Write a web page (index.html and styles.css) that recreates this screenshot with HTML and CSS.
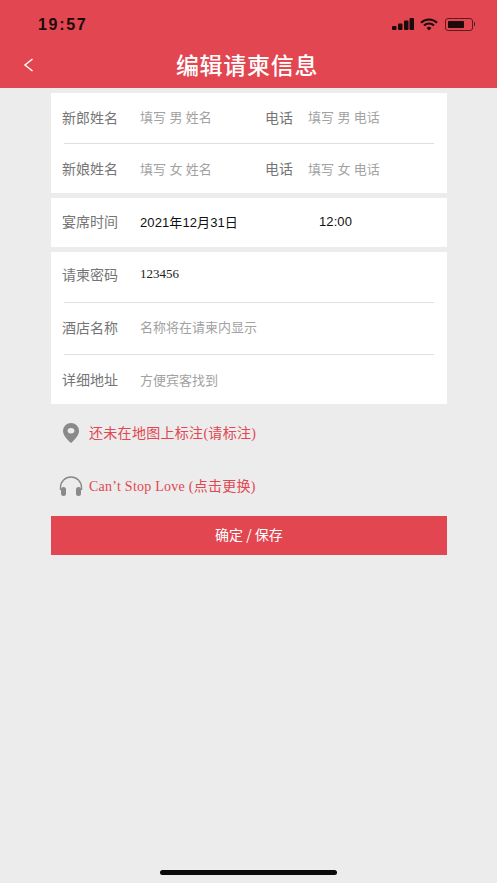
FILE: index.html
```html
<!DOCTYPE html>
<html lang="zh-CN">
<head>
    <meta charset="UTF-8">
    <meta name="viewport" content="width=device-width, initial-scale=1.0">
    <title>编辑请柬信息</title>
    <link rel="stylesheet" href="styles.css">
</head>
<body>
    <header class="header">
        <div class="status-bar">
            <span class="status-time">19:57</span>
            <div class="status-icons">
                <svg class="icon-signal" width="22" height="12" viewBox="0 0 22 12">
                    <rect x="0" y="8" width="4.500" height="4" rx="1"/>
                    <rect x="6" y="5.500" width="4.500" height="6.500" rx="1"/>
                    <rect x="12" y="2.500" width="4.500" height="9.500" rx="1"/>
                    <rect x="17.500" y="0" width="4.500" height="12" rx="1"/>
                </svg>
                <svg class="icon-wifi" width="18" height="13" viewBox="0 0 19 13">
                    <path d="M1 4.600a12.200 12.200 0 0 1 17 0" fill="none" stroke="#1d0a0c" stroke-width="2.200"/>
                    <path d="M4.200 7.600a7.600 7.600 0 0 1 10.600 0" fill="none" stroke="#1d0a0c" stroke-width="2.200"/>
                    <path d="M7 10.200a3.600 3.600 0 0 1 5 0l-2.500 2.600z" fill="#1d0a0c"/>
                </svg>
                <div class="battery">
                    <div class="battery-level"></div>
                </div>
                <div class="battery-cap"></div>
            </div>
        </div>
        <div class="title-bar">
            <svg class="back" width="11" height="14" viewBox="0 0 11 14">
                <path d="M9.500 1 2 7l7.500 6" fill="none" stroke="#fff" stroke-width="1.500"/>
            </svg>
            <h1 class="title">编辑请柬信息</h1>
        </div>
    </header>

    <main class="main">
        <section class="card">
            <div class="row">
                <span class="label">新郎姓名</span>
                <span class="hint name-hint">填写 男 姓名</span>
                <span class="label phone-label">电话</span>
                <span class="hint">填写 男 电话</span>
            </div>
            <div class="row">
                <span class="label">新娘姓名</span>
                <span class="hint name-hint">填写 女 姓名</span>
                <span class="label phone-label">电话</span>
                <span class="hint">填写 女 电话</span>
            </div>
        </section>

        <section class="card">
            <div class="row row-time">
                <span class="label">宴席时间</span>
                <span class="value date-value">2021年12月31日</span>
                <span class="value">12:00</span>
            </div>
        </section>

        <section class="card">
            <div class="row row-password">
                <span class="label">请柬密码</span>
                <span class="password">123456</span>
            </div>
            <div class="row row-hotel">
                <span class="label">酒店名称</span>
                <span class="hint">名称将在请柬内显示</span>
            </div>
            <div class="row">
                <span class="label">详细地址</span>
                <span class="hint">方便宾客找到</span>
            </div>
        </section>

        <div class="link-row link-map">
            <svg class="icon-pin" width="16" height="20" viewBox="0 0 16 20">
                <path fill-rule="evenodd" fill="#8a8a8a" d="M8 0a8 8 0 0 1 8 8c0 4-4 8.500-8 12C4 16.500 0 12 0 8a8 8 0 0 1 8-8zm0 5a3.400 2.700 0 1 0 0 5.400 3.400 2.700 0 0 0 0-5.400z"/>
            </svg>
            <span class="link-text map-text">还未在地图上标注(请标注)</span>
        </div>

        <div class="link-row link-music">
            <svg class="icon-headphones" width="24" height="20" viewBox="0 0 24 20">
                <path d="M1.500 14V11.500a10.500 10.500 0 0 1 21 0V14" fill="none" stroke="#8a8a8a" stroke-width="1.400"/>
                <rect x="2" y="11" width="5" height="9" rx="2.500" fill="#8a8a8a"/>
                <rect x="17" y="11" width="5" height="9" rx="2.500" fill="#8a8a8a"/>
            </svg>
            <span class="link-text music-text">Can’t Stop Love (点击更换)</span>
        </div>

        <div class="save-button">确定 / 保存</div>
    </main>

    <div class="home-indicator"></div>
</body>
</html>
```

FILE: styles.css
```css
body {
    margin: 0;
    height: 883px;
    overflow: hidden;
    position: relative;
    background-color: #ececec;
    font-family: "Liberation Serif", "Noto Sans CJK SC", serif;
}

.header {
    height: 88px;
    background-color: #e24651;
}

.status-bar {
    height: 46px;
    padding: 2px 22px 0 38px;
    display: flex;
    justify-content: space-between;
    align-items: center;
    box-sizing: border-box;
}

.status-time {
    margin-top: 2px;
    font-family: "Liberation Sans", sans-serif;
    font-size: 16px;
    font-weight: bold;
    letter-spacing: 1.700px;
    color: #1d0a0c;
}

.status-icons {
    display: flex;
    align-items: center;
}

.icon-signal {
    fill: #1d0a0c;
    margin-right: 6px;
}

.icon-wifi {
    margin-right: 7px;
}

.battery {
    width: 28px;
    height: 13px;
    padding: 2px;
    box-sizing: border-box;
    border: 1px solid #5c1c22;
    border-radius: 3px;
}

.battery-level {
    width: 16px;
    height: 100%;
    background-color: #1d0a0c;
    border-radius: 1px;
}

.battery-cap {
    width: 1px;
    height: 4px;
    margin-left: 1px;
    background-color: #5c1c22;
}

.title-bar {
    height: 42px;
    padding: 0 3px 6px 0;
    box-sizing: border-box;
    position: relative;
    display: flex;
    justify-content: center;
    align-items: center;
}

.back {
    position: absolute;
    left: 23px;
    top: 12px;
}

.title {
    margin: 0;
    font-family: "Noto Sans CJK SC", sans-serif;
    font-size: 23px;
    font-weight: 500;
    line-height: 36px;
    letter-spacing: 0.700px;
    color: #fff;
}

.main {
    width: 396px;
    margin: 5px 0 0 51px;
}

.card {
    background-color: #fff;
    margin-bottom: 5px;
    padding: 0 13px;
}

.row {
    height: 51px;
    padding-bottom: 3px;
    box-sizing: border-box;
    display: flex;
    align-items: center;
    border-bottom: 1px solid #e0e0e0;
    font-family: "Noto Sans CJK SC", sans-serif;
}

.row:last-child {
    height: 49px;
    padding-bottom: 1px;
    border-bottom: none;
}

.label {
    width: 78px;
    margin-left: -2px;
    font-size: 14px;
    color: #757575;
    flex-shrink: 0;
}

.phone-label {
    width: 43px;
    margin-left: 0;
}

.hint {
    font-size: 13px;
    word-spacing: 0.500px;
    color: #a2a2a2;
}

.name-hint {
    width: 125px;
}

.value {
    font-family: "Liberation Sans", "Noto Sans CJK SC", sans-serif;
    font-size: 13px;
    letter-spacing: 0.100px;
    color: #111;
}

.row.row-time {
    padding-bottom: 3px;
}

.date-value {
    width: 179px;
}

.row-password {
    padding-bottom: 7px;
}

.row-hotel {
    height: 52px;
    padding-bottom: 4px;
}

.password {
    font-size: 13px;
    font-family: "Liberation Serif", serif;
    color: #222;
}

.link-row {
    display: flex;
    align-items: center;
    height: 24px;
}

.link-map {
    margin-top: 17px;
    padding-left: 12px;
}

.link-music {
    margin-top: 29px;
    padding-left: 8px;
}

.icon-pin {
    margin-right: 10px;
}

.icon-headphones {
    margin-right: 6px;
}

.link-text {
    margin-top: -2px;
    font-size: 14px;
    color: #e24651;
}

.map-text {
    letter-spacing: 0.300px;
}

.music-text {
    letter-spacing: 0.250px;
}

.save-button {
    height: 39px;
    margin-top: 18px;
    padding-bottom: 2px;
    box-sizing: border-box;
    background-color: #e24651;
    color: #fff;
    font-family: "Noto Sans CJK SC", sans-serif;
    font-size: 14px;
    line-height: 37px;
    text-align: center;
}

.home-indicator {
    position: absolute;
    left: 160px;
    top: 870px;
    width: 177px;
    height: 5px;
    border-radius: 3px;
    background-color: #0a0a0a;
}
```
